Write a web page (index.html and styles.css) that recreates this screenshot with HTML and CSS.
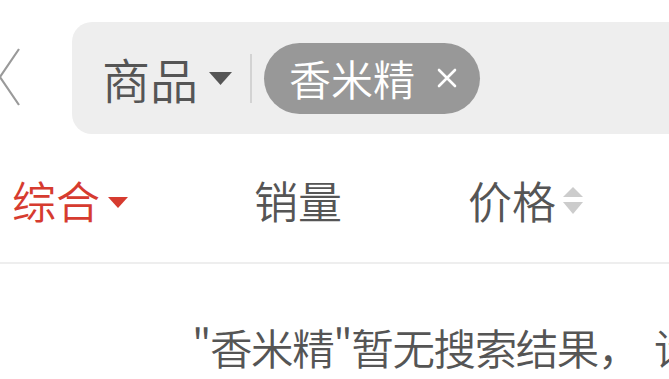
FILE: index.html
```html
<!DOCTYPE html>
<html lang="zh">
<head>
<meta charset="utf-8">
<link rel="stylesheet" href="styles.css">
</head>
<body>
<div class="page">
  <div class="header">
    <div class="back">
      <svg width="24" height="60" viewBox="0 0 24 60"><polyline points="20,1 1,29 20,57" fill="none" stroke="#9a9a9a" stroke-width="2.2"/></svg>
    </div>
    <div class="search">
      <span class="scope">商品</span>
      <svg class="caret" width="23" height="13" viewBox="0 0 23 13"><polygon points="0,0 23,0 11.5,13" fill="#555"/></svg>
      <span class="divider"></span>
      <span class="pill">
        <span class="pill-text">香米精</span>
        <svg class="close" width="20" height="20" viewBox="0 0 20 20"><path d="M2 2 L18 18 M18 2 L2 18" stroke="#fff" stroke-width="2.6" stroke-linecap="round"/></svg>
      </span>
    </div>
  </div>
  <div class="tabs">
    <div class="tab active">
      <span>综合</span>
      <svg width="20" height="11" viewBox="0 0 20 11"><polygon points="0,0 20,0 10,11" fill="#d63b2f"/></svg>
    </div>
    <div class="tab"><span>销量</span></div>
    <div class="tab">
      <span>价格</span>
      <svg class="sort" width="20" height="27" viewBox="0 0 20 27"><polygon points="10,0 20,10 0,10" fill="#cccccc"/><polygon points="0,15 20,15 10,27" fill="#cccccc"/></svg>
    </div>
  </div>
  <div class="empty">"香米精"暂无搜索结果<span class="comma">，</span>请换个关键词试试</div>
</div>
</body>
</html>
```
FILE: styles.css
```css
html, body {
  margin: 0;
  padding: 0;
  background: #ffffff;
}
body {
  width: 669px;
  height: 379px;
  overflow: hidden;
  font-family: "Noto Sans CJK SC", "Noto Sans", sans-serif;
  font-weight: 350;
}
.page {
  width: 669px;
  overflow: hidden;
}
.header {
  display: flex;
  align-items: center;
  padding-top: 22px;
  height: 112px;
}
.back {
  width: 73px;
  flex: 0 0 73px;
  display: flex;
  align-items: center;
  margin-left: -1px;
}
.back svg {
  display: block;
}
.search {
  flex: 0 0 640px;
  height: 112px;
  background: #eeeeee;
  border-radius: 20px;
  display: flex;
  align-items: center;
  padding-left: 30px;
  box-sizing: border-box;
}
.scope {
  font-size: 48px;
  color: #555555;
  line-height: 1;
}
.caret {
  margin-left: 11px;
  display: block;
}
.divider {
  width: 2px;
  height: 49px;
  background: #d3d3d3;
  margin-left: 18px;
}
.pill {
  margin-left: 12px;
  height: 71px;
  border-radius: 36px;
  background: #989898;
  display: flex;
  align-items: center;
  padding: 0 23px 0 25px;
}
.pill-text {
  font-size: 42px;
  color: #ffffff;
  line-height: 1;
}
.close {
  margin-left: 22px;
  display: block;
}
.tabs {
  display: flex;
  align-items: center;
  margin-top: 8px;
  padding-left: 12px;
  gap: 126px;
  border-bottom: 2px solid #eeeeee;
  box-sizing: border-box;
  height: 122px;
  padding-bottom: 4px;
}
.tab {
  display: flex;
  align-items: center;
  font-size: 44px;
  color: #555555;
  line-height: 1;
}
.tab.active {
  color: #d63b2f;
}
.tab.active svg {
  margin-left: 8px;
  margin-top: 4px;
}
.sort {
  margin-left: 7px;
}
.empty {
  padding-left: 192px;
  padding-top: 57px;
  font-size: 42.5px;
  letter-spacing: -1.4px;
  line-height: 1.2;
  color: #555555;
  white-space: nowrap;
}
.comma {
  margin-right: 15px;
}
```
